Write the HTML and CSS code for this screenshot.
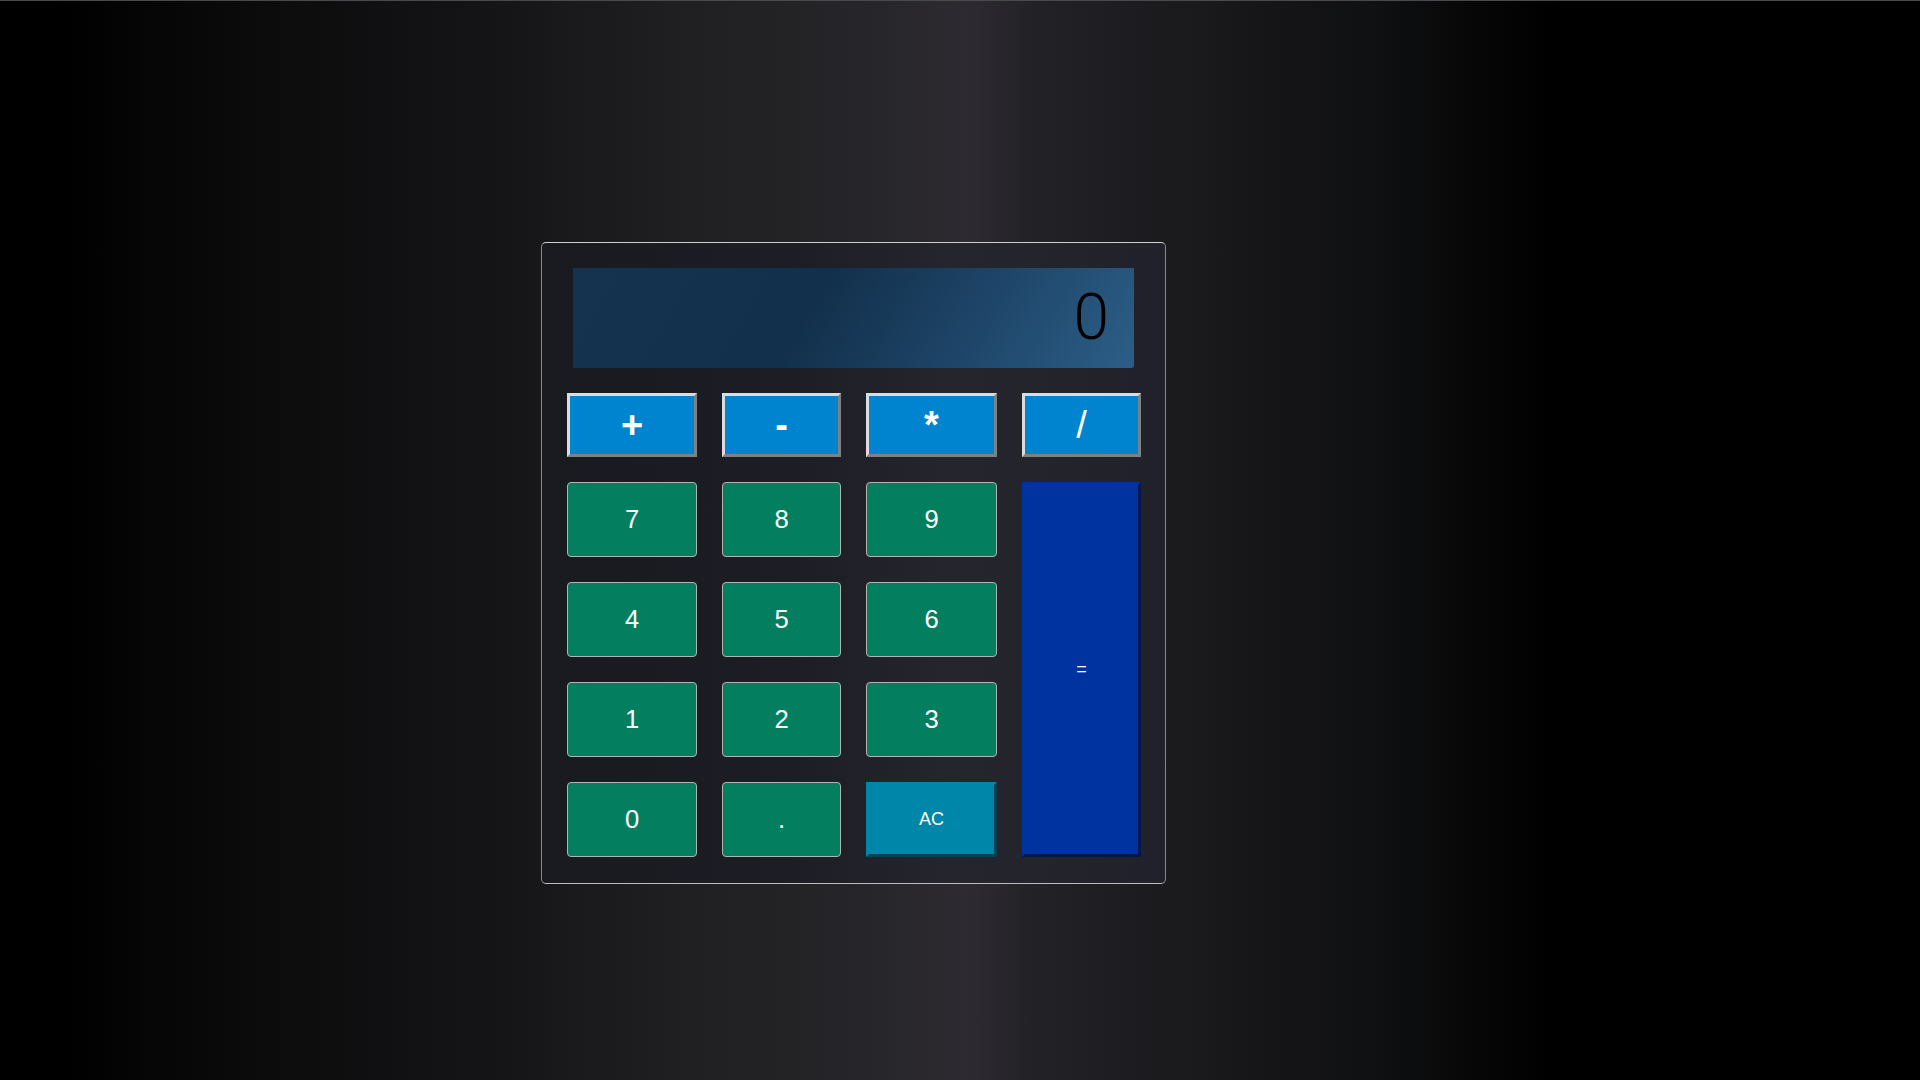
FILE: index.html
```html
<!DOCTYPE html>
<html lang="en">
<head>
<meta charset="utf-8">
<title>Calculator</title>
<link rel="stylesheet" href="styles.css">
</head>
<body>
  <div class="calculator">
    <div class="display"><span class="display-value">0</span></div>
    <div class="keys">
      <button class="key op">+</button>
      <button class="key op">-</button>
      <button class="key op">*</button>
      <button class="key op op-thin">/</button>

      <button class="key num">7</button>
      <button class="key num">8</button>
      <button class="key num">9</button>
      <button class="key equal">=</button>

      <button class="key num">4</button>
      <button class="key num">5</button>
      <button class="key num">6</button>

      <button class="key num">1</button>
      <button class="key num">2</button>
      <button class="key num">3</button>

      <button class="key num">0</button>
      <button class="key num">.</button>
      <button class="key clear">AC</button>
    </div>
  </div>
</body>
</html>
```

FILE: styles.css
```css
* {
  box-sizing: border-box;
}

html, body {
  margin: 0;
  height: 100%;
}

body {
  min-height: 100vh;
  padding: 241px 0 0 541px;
  border-top: 1px solid #4a4a4c;
  background: linear-gradient(to right,
    #000 0%,
    #000 3%,
    #0b0b0c 13%,
    #141416 25%,
    #1f1f21 35%,
    #262529 45%,
    #2d2b31 50.4%,
    #222126 54%,
    #1a191c 62%,
    #0f1012 72%,
    #060606 77%,
    #000 81%,
    #000 100%);
  font-family: "Liberation Sans", Arial, sans-serif;
}

.calculator {
  width: 625px;
  height: 642px;
  padding: 25px 24px 25px 25px;
  border: 1px solid;
  border-color: #cfcfcf #8a8a8a #bdbdbd #8a8a8a;
  border-radius: 5px;
  background: linear-gradient(to right, #191a20 0%, #1d1e25 40%, #25262d 65%, #20212a 100%);
}

.display {
  width: 561px;
  height: 100px;
  margin: 0 0 25px 6px;
  padding: 0 25px;
  display: flex;
  align-items: center;
  justify-content: flex-end;
  background: linear-gradient(120deg, #15334f 0%, #12304b 42%, #1d4366 68%, #2c5e87 100%);
  border-bottom-right-radius: 3px;
}

.display-value {
  font-family: Roboto, "Liberation Sans", sans-serif;
  font-weight: 300;
  font-size: 64px;
  line-height: 1;
  color: #000;
}

.keys {
  display: grid;
  grid-template-columns: 130px 119px 131px 119px;
  grid-template-rows: 64px repeat(4, 75px);
  column-gap: 25px;
  row-gap: 25px;
}

.key {
  margin: 0;
  padding: 0;
  color: #fff;
  font-family: "Liberation Sans", Arial, sans-serif;
  cursor: pointer;
}

.op {
  background: #0084d0;
  border: 3px solid;
  border-color: #dcdcdc #808080 #808080 #dcdcdc;
  font-size: 38px;
  font-weight: bold;
  line-height: 1;
}

.op-thin {
  font-weight: normal;
}

.num {
  background: #037f5f;
  border: 1px solid #b4b4b4;
  border-radius: 4px;
  font-size: 25.6px;
}

.clear {
  background: #0086a8;
  border: 3px solid;
  border-color: #0086a8 #004354 #004354 #0086a8;
  font-size: 18px;
}

.equal {
  grid-column: 4;
  grid-row: 2 / span 4;
  background: #0033a0;
  border: 3px solid;
  border-color: #0033a0 #00184c #00184c #0033a0;
  font-size: 18px;
}
```
